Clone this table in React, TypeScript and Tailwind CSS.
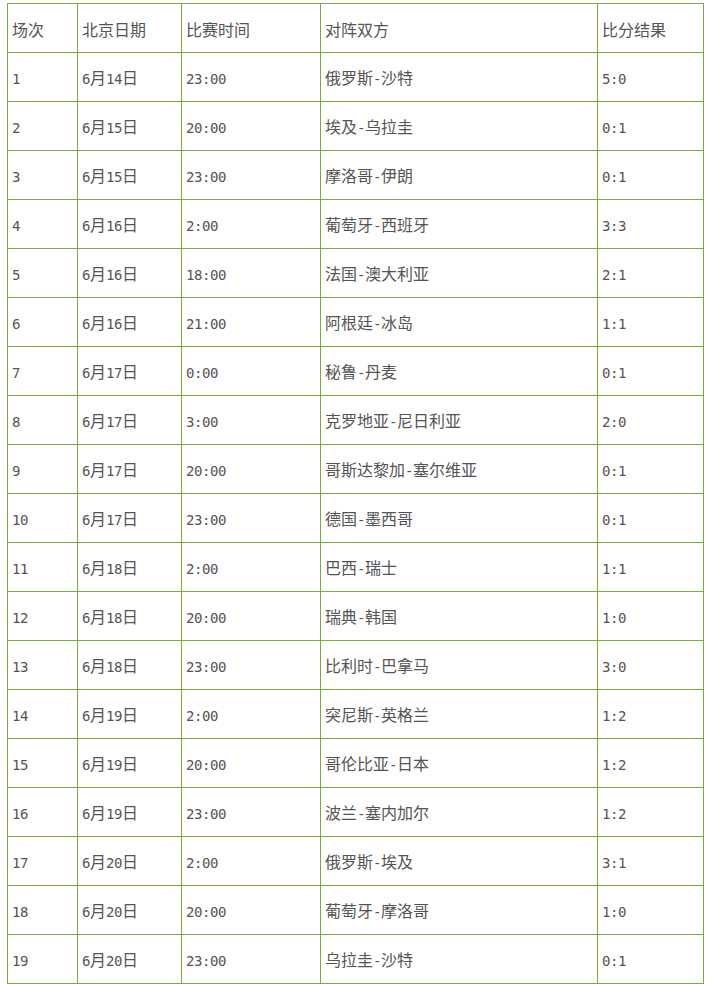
import React from "react";

const rows: string[][] = [
  ["场次", "北京日期", "比赛时间", "对阵双方", "比分结果"],
  ["1", "6月14日", "23:00", "俄罗斯-沙特", "5:0"],
  ["2", "6月15日", "20:00", "埃及-乌拉圭", "0:1"],
  ["3", "6月15日", "23:00", "摩洛哥-伊朗", "0:1"],
  ["4", "6月16日", "2:00", "葡萄牙-西班牙", "3:3"],
  ["5", "6月16日", "18:00", "法国-澳大利亚", "2:1"],
  ["6", "6月16日", "21:00", "阿根廷-冰岛", "1:1"],
  ["7", "6月17日", "0:00", "秘鲁-丹麦", "0:1"],
  ["8", "6月17日", "3:00", "克罗地亚-尼日利亚", "2:0"],
  ["9", "6月17日", "20:00", "哥斯达黎加-塞尔维亚", "0:1"],
  ["10", "6月17日", "23:00", "德国-墨西哥", "0:1"],
  ["11", "6月18日", "2:00", "巴西-瑞士", "1:1"],
  ["12", "6月18日", "20:00", "瑞典-韩国", "1:0"],
  ["13", "6月18日", "23:00", "比利时-巴拿马", "3:0"],
  ["14", "6月19日", "2:00", "突尼斯-英格兰", "1:2"],
  ["15", "6月19日", "20:00", "哥伦比亚-日本", "1:2"],
  ["16", "6月19日", "23:00", "波兰-塞内加尔", "1:2"],
  ["17", "6月20日", "2:00", "俄罗斯-埃及", "3:1"],
  ["18", "6月20日", "20:00", "葡萄牙-摩洛哥", "1:0"],
  ["19", "6月20日", "23:00", "乌拉圭-沙特", "0:1"],
];

function Txt({ s }: { s: string }) {
  const parts = s.match(/[\x00-\x7f]+|[^\x00-\x7f]+/g) || [];
  return (
    <span>
      {parts.map((p, i) =>
        /^[\x00-\x7f]+$/.test(p) ? (
          <span key={i} className="font-['DejaVu_Sans_Mono',monospace] text-[14px] tracking-[-0.43px]">
            {p}
          </span>
        ) : (
          <span key={i}>{p}</span>
        )
      )}
    </span>
  );
}

export default function App() {
  return (
    <div className="bg-white w-[712px] h-[984px] pt-[3px] pl-[7px] font-['Noto_Sans_CJK_SC',sans-serif] text-[16px] text-[#555]">
      <div className="grid grid-cols-[70px_104px_139px_277px_106px] w-[697px] border-l border-t border-[#7aab3a]">
        {rows.map((r, ri) =>
          r.map((c, ci) => (
            <div
              key={ri + "-" + ci}
              className="h-[49px] border-r border-b border-[#7aab3a] pl-[4px] pt-[1px] flex items-center leading-none whitespace-nowrap"
            >
              <Txt s={c} />
            </div>
          ))
        )}
      </div>
    </div>
  );
}
